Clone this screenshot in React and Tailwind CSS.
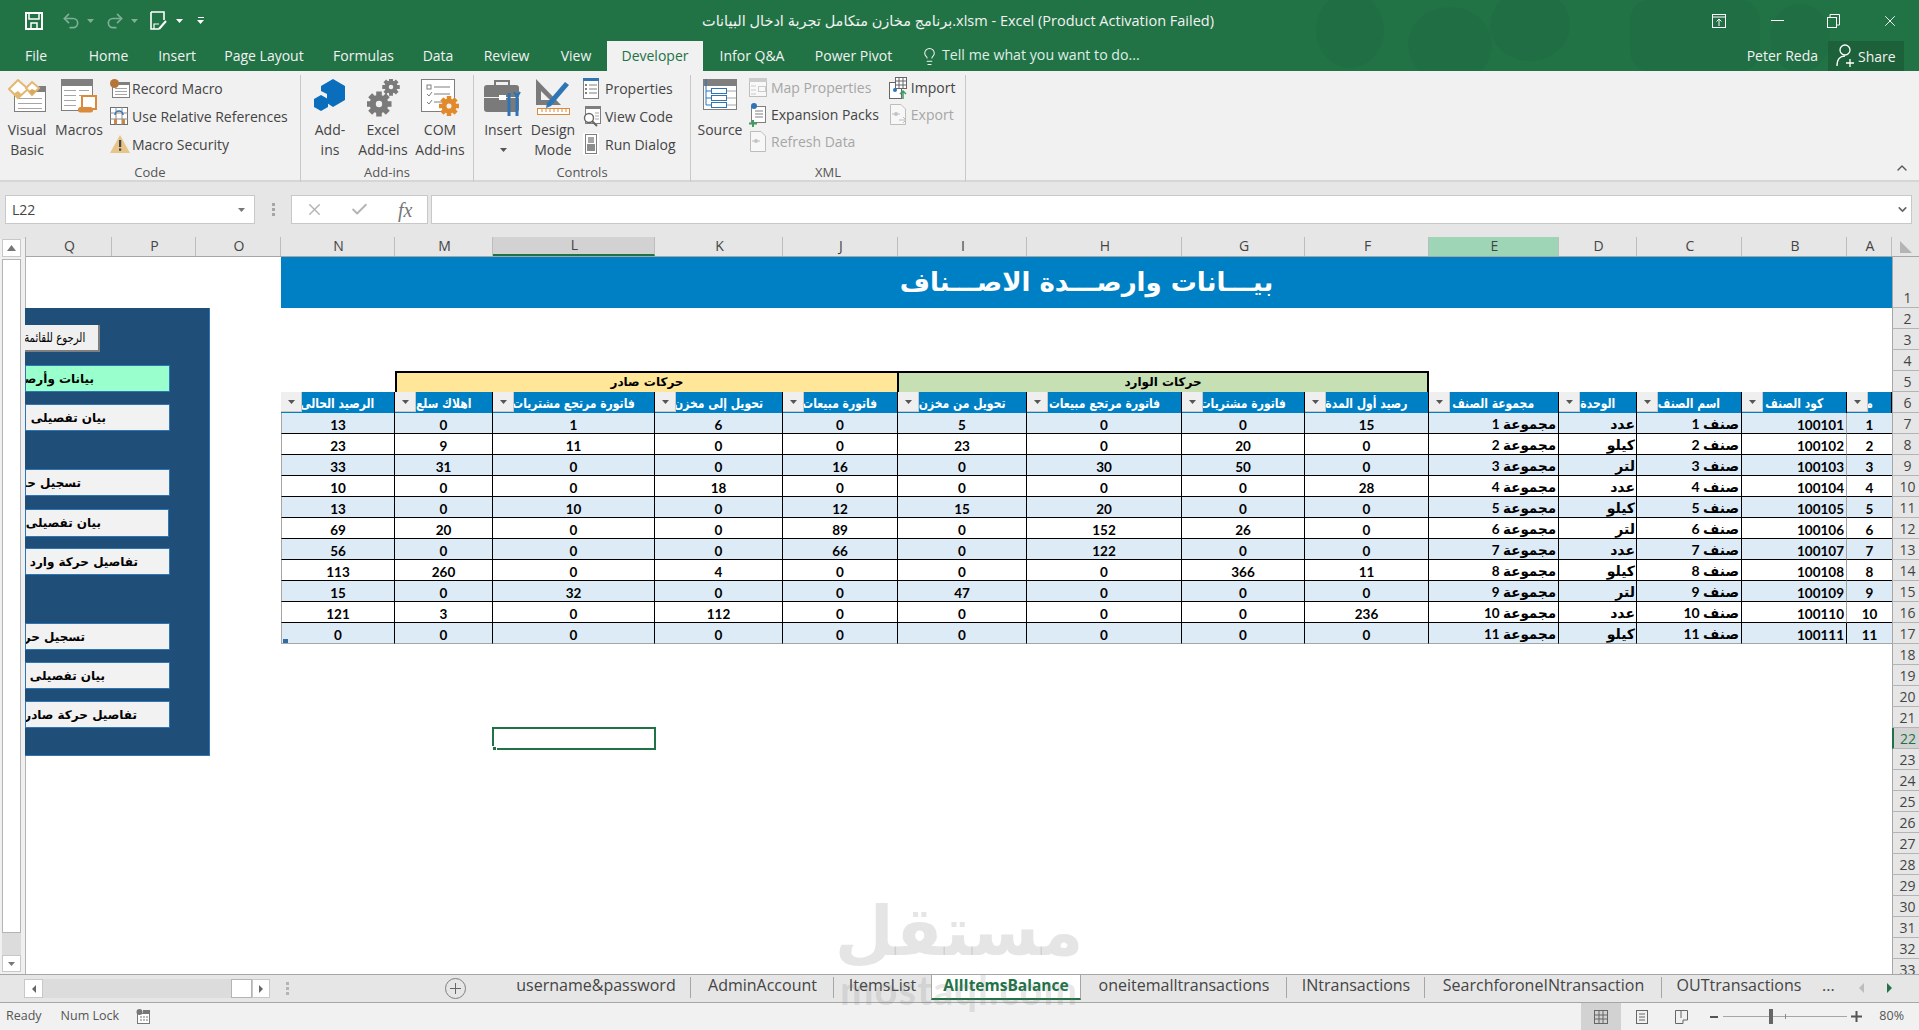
import React from "react";
import { Undo2, Redo2, Lightbulb, X, Check, ChevronUp, ChevronDown } from "lucide-react";

// sheet columns Q..A plus the row header, right to left like the workbook
const ROW = "grid grid-rows-[minmax(0,1fr)] grid-cols-[86px_84px_85px_114px_98px_162px_128px_115px_129px_155px_123px_124px_130px_78px_105px_105px_45px_27px]";
const AR = "font-['DejaVu_Sans',sans-serif]";
const NUM = "font-['Lato',sans-serif]";
const MIX = "font-['Lato','DejaVu_Sans',sans-serif]";

const colLetters = ["Q", "P", "O", "N", "M", "L", "K", "J", "I", "H", "G", "F", "E", "D", "C", "B", "A"];

const headers = [
  "الرصيد الحالى",
  "اهلاك سلع",
  "فاتورة مرتجع مشتريات",
  "تحويل إلى مخزن",
  "فاتورة مبيعات",
  "تحويل من مخزن",
  "فاتورة مرتجع مبيعات",
  "فاتورة مشتريات",
  "رصيد أول المدة",
  "مجموعة الصنف",
  "الوحدة",
  "اسم الصنف",
  "كود الصنف",
  "م",
];

const rows = [
  [13, 0, 1, 6, 0, 5, 0, 0, 15],
  [23, 9, 11, 0, 0, 23, 0, 20, 0],
  [33, 31, 0, 0, 16, 0, 30, 50, 0],
  [10, 0, 0, 18, 0, 0, 0, 0, 28],
  [13, 0, 10, 0, 12, 15, 20, 0, 0],
  [69, 20, 0, 0, 89, 0, 152, 26, 0],
  [56, 0, 0, 0, 66, 0, 122, 0, 0],
  [113, 260, 0, 4, 0, 0, 0, 366, 11],
  [15, 0, 32, 0, 0, 47, 0, 0, 0],
  [121, 3, 0, 112, 0, 0, 0, 0, 236],
  [0, 0, 0, 0, 0, 0, 0, 0, 0],
];
const units = ["عدد", "كيلو", "لتر"];

const panelButtons = [
  { text: "بيانات وأرصدة الاصناف", cls: "mt-[13px] h-[27px] w-[145px] pr-[75px] bg-[#99ffcc]" },
  { text: "بيان تفصيلى بحركة صنف", cls: "mt-[12px] h-[27px] w-[145px] pr-[63px] bg-[#f2f2f2]" },
  { text: "تسجيل حركة وارد", cls: "mt-[38px] h-[27px] w-[145px] pr-[88px] bg-[#f2f2f2]" },
  { text: "بيان تفصيلى بحركة وارد", cls: "mt-[13px] h-[28px] w-[144px] pr-[67px] bg-[#f2f2f2]" },
  { text: "تفاصيل حركة وارد من مورد", cls: "mt-[11px] h-[27px] w-[145px] pr-[31px] bg-[#f2f2f2]" },
  { text: "تسجيل حركة صادر", cls: "mt-[48px] h-[27px] w-[145px] pr-[84px] bg-[#f2f2f2]" },
  { text: "بيان تفصيلى بحركة صادر", cls: "mt-[12px] h-[27px] w-[145px] pr-[64px] bg-[#f2f2f2]" },
  { text: "تفاصيل حركة صادر من مخزن", cls: "mt-[12px] h-[27px] w-[145px] pr-[32px] bg-[#f2f2f2]" },
];

const topTabs = [
  { label: "File", cls: "w-[72px]" },
  { label: "Home", cls: "w-[73px]" },
  { label: "Insert", cls: "w-[64px]" },
  { label: "Page Layout", cls: "w-[110px]" },
  { label: "Formulas", cls: "w-[89px]" },
  { label: "Data", cls: "w-[60px]" },
  { label: "Review", cls: "w-[77px]" },
  { label: "View", cls: "w-[62px]" },
  { label: "Developer", cls: "w-[96px] bg-[#f1f1f1] text-[#217346]" },
  { label: "Infor Q&A", cls: "w-[98px]" },
  { label: "Power Pivot", cls: "w-[105px]" },
];

const sheetTabs = [
  { label: "username&password", cls: "w-[190px]" },
  { label: "AdminAccount", cls: "w-[143px]" },
  { label: "ItemsList", cls: "w-[97px]" },
  { label: "AllItemsBalance", cls: "w-[150px]", active: true },
  { label: "oneitemalltransactions", cls: "w-[206px]" },
  { label: "INtransactions", cls: "w-[138px]" },
  { label: "SearchforoneINtransaction", cls: "w-[237px]" },
  { label: "OUTtransactions", cls: "w-[154px]" },
];

/* ---------- drawn ribbon icons ---------- */
const SheetLines = ({ x, y, w, n, gap = 5 }) =>
  Array.from({ length: n }).map((_, i) => (
    <rect key={i} x={x} y={y + i * gap} width={w} height="1" fill="#a6a6a6" />
  ));

const VisualBasicIcon = () => (
  <svg width="38" height="33" viewBox="0 0 38 33">
    <rect x="6.5" y="10.5" width="31" height="22" fill="#fff" stroke="#7f7f7f" />
    <rect x="28" y="7" width="10" height="6" fill="#7f7f7f" />
    <SheetLines x={10} y={19} w={24} n={3} />
    <path d="M10 1 L20 10 L10 19 L1 10 Z" fill="#fff" stroke="#e3b873" strokeWidth="2" />
    <path d="M10 12 L14 15.5 L10 19 L5 15 Z" fill="#e3b873" />
    <path d="M24 3 L31 9 L24 16 L18 9 Z" fill="#fff" stroke="#e3b873" strokeWidth="2" />
    <path d="M24 10 L28 12 L24 16 L21 12 Z" fill="#d9a860" />
  </svg>
);
const MacrosIcon = () => (
  <svg width="37" height="34" viewBox="0 0 37 34">
    <rect x="0.5" y="0.5" width="31" height="31" fill="#fff" stroke="#7f7f7f" />
    <rect x="0" y="0" width="32" height="7" fill="#7f7f7f" />
    <SheetLines x={3} y={11} w={12} n={4} />
    <SheetLines x={18} y={11} w={10} n={2} />
    <path d="M21 17 H35 V30 H21 Z" fill="#fff" stroke="#d98a3d" strokeWidth="2" />
    <rect x="17" y="28" width="15" height="5.5" rx="2.5" fill="#d98a3d" />
  </svg>
);
const RecordIcon = () => (
  <svg width="20" height="19" viewBox="0 0 20 19">
    <rect x="2.5" y="3.5" width="17" height="15" fill="#fff" stroke="#7f7f7f" />
    <rect x="2" y="3" width="18" height="3" fill="#7f7f7f" />
    <SheetLines x={5} y={9} w={12} n={3} gap={3} />
    <circle cx="4.5" cy="4.5" r="4.5" fill="#b5763a" />
  </svg>
);
const RelativeIcon = () => (
  <svg width="18" height="18" viewBox="0 0 18 18">
    <rect x="0.5" y="0.5" width="17" height="17" fill="#fff" stroke="#6f6f6f" />
    <path d="M6 0V18M12 0V18M0 6H18M0 12H18" stroke="#8c8c8c" />
    <path d="M5 8 A4 4 0 0 1 13 8" fill="none" stroke="#2e75b6" strokeWidth="1.5" />
    <rect x="4" y="12" width="3" height="5" fill="#c98945" />
    <rect x="12" y="12" width="3" height="5" fill="#c98945" />
  </svg>
);
const WarnIcon = () => (
  <svg width="20" height="18" viewBox="0 0 20 18">
    <path d="M10 0 L20 18 H0 Z" fill="#e6c48a" />
    <rect x="9" y="5" width="2.2" height="7" fill="#444" />
    <rect x="9" y="13.5" width="2.2" height="2.2" fill="#444" />
  </svg>
);
const AddInsIcon = () => (
  <svg width="32" height="32" viewBox="0 0 32 32">
    <path d="M19 0 L31 7 V21 L19 28 L13 24 V15 L7 12 V7 Z" fill="#0a6ebd" />
    <path d="M7 16 L14 20 V28 L7 32 L0 28 V20 Z" fill="#0a6ebd" />
  </svg>
);
const Gear = ({ x, y, r, fill = "#7a7a7a" }) => (
  <g transform={`translate(${x} ${y})`}>
    {[0, 45, 90, 135].map((a) => (
      <rect key={a} x={-r * 0.28} y={-r * 1.25} width={r * 0.56} height={r * 2.5} fill={fill} transform={`rotate(${a})`} />
    ))}
    <circle r={r * 0.62} fill="none" stroke={fill} strokeWidth={r * 0.62} />
    <circle r={r * 0.32} fill="#f1f1f1" />
  </g>
);
const ExcelAddInsIcon = () => (
  <svg width="33" height="38" viewBox="0 0 33 38">
    <Gear x={12} y={25} r={10} />
    <Gear x={24} y={8} r={7} />
  </svg>
);
const ComIcon = () => (
  <svg width="38" height="38" viewBox="0 0 38 38">
    <rect x="0.5" y="0.5" width="33" height="32" fill="#fff" stroke="#7f7f7f" />
    <rect x="6" y="6" width="4" height="4" fill="none" stroke="#7f7f7f" />
    <path d="M13 8H29M13 15H29M13 23H22" stroke="#7f7f7f" />
    <path d="M6 15l2 2 3-4M6 23l2 2 3-4" stroke="#7f7f7f" fill="none" />
    <Gear x={28} y={27} r={8} fill="#e28a2b" />
  </svg>
);
const ToolboxIcon = () => (
  <svg width="38" height="38" viewBox="0 0 38 38">
    <path d="M11 6 V2 H25 V6" fill="none" stroke="#7a7a7a" strokeWidth="2" />
    <rect x="0" y="6" width="35" height="27" rx="3" fill="#7a7a7a" />
    <rect x="0" y="18" width="35" height="1" fill="#f1f1f1" />
    <rect x="15" y="16" width="7" height="5" fill="#fff" />
    <path d="M25 14 V37 M33 14 V37" stroke="#2e75b6" strokeWidth="3" />
    <path d="M30 13 L33 18 L36 13" stroke="#2e75b6" strokeWidth="2" fill="none" />
  </svg>
);
const DesignIcon = () => (
  <svg width="36" height="38" viewBox="0 0 36 38">
    <path d="M1 0 L1 26 L26 26 Z M6 12 L6 21 L15 21 Z" fill="#7a7a7a" fillRule="evenodd" />
    <path d="M12 24 L30 3 L34 6 L16 27 L11 29 Z" fill="#2e75b6" />
    <rect x="2.5" y="29.5" width="32" height="6" fill="#fff" stroke="#d98a3d" />
    <path d="M7 30v3M11 30v3M15 30v3M19 30v3M23 30v3M27 30v3M31 30v3" stroke="#d98a3d" />
  </svg>
);
const PropsIcon = () => (
  <svg width="16" height="21" viewBox="0 0 16 21">
    <rect x="0.5" y="0.5" width="15" height="20" fill="#fff" stroke="#7f7f7f" />
    <rect x="0" y="0" width="16" height="3" fill="#2e75b6" />
    <path d="M6 7H14M6 11H14M6 15H14" stroke="#7f7f7f" />
    <rect x="2" y="6" width="2" height="2" fill="#7f7f7f" />
    <rect x="2" y="10" width="2" height="2" fill="#7f7f7f" />
    <rect x="2" y="14" width="2" height="2" fill="#7f7f7f" />
  </svg>
);
const ViewCodeIcon = () => (
  <svg width="20" height="21" viewBox="0 0 20 21">
    <rect x="2.5" y="0.5" width="15" height="17" fill="#fff" stroke="#7f7f7f" />
    <rect x="2" y="0" width="16" height="3" fill="#7f7f7f" />
    <circle cx="6" cy="12" r="4.5" fill="#fff" stroke="#666" strokeWidth="1.4" />
    <path d="M9 15 L14 20" stroke="#666" strokeWidth="2" />
    <path d="M12 7H16M12 10H16M12 13H16" stroke="#a6a6a6" />
  </svg>
);
const RunDialogIcon = () => (
  <svg width="16" height="22" viewBox="0 0 16 22">
    <rect x="0" y="0" width="16" height="22" fill="#fff" />
    <rect x="2.5" y="1.5" width="11" height="19" fill="#fff" stroke="#7f7f7f" />
    <rect x="5" y="4" width="6" height="6" fill="#a6a6a6" />
    <rect x="4" y="11" width="8" height="7" fill="#8c8c8c" />
  </svg>
);
const SourceIcon = () => (
  <svg width="34" height="31" viewBox="0 0 34 31">
    <rect x="0.5" y="0.5" width="33" height="30" fill="#fff" stroke="#7f7f7f" />
    <rect x="0" y="0" width="34" height="7" fill="#7f7f7f" />
    <path d="M24 12H33M24 19H33M24 26H33" stroke="#a6a6a6" />
    <path d="M3 0V26H8M3 12H8M3 19H8" stroke="#2e75b6" fill="none" />
    <rect x="8.5" y="9.5" width="15" height="5" fill="#fff" stroke="#2e75b6" />
    <rect x="8.5" y="16.5" width="15" height="5" fill="#fff" stroke="#2e75b6" />
    <rect x="8.5" y="23.5" width="15" height="5" fill="#fff" stroke="#2e75b6" />
  </svg>
);
const MapIcon = () => (
  <svg width="18" height="19" viewBox="0 0 18 19" opacity="0.5">
    <rect x="0.5" y="0.5" width="17" height="18" fill="#fff" stroke="#8c8c8c" />
    <rect x="0" y="0" width="18" height="4" fill="#a6a6a6" />
    <path d="M2 8H7M2 12H7M2 16H7" stroke="#a6a6a6" />
    <rect x="9.5" y="8.5" width="7" height="5" fill="#fff" stroke="#a6a6a6" />
  </svg>
);
const PacksIcon = () => (
  <svg width="18" height="24" viewBox="0 0 18 24">
    <rect x="2.5" y="3.5" width="14" height="16" fill="#fff" stroke="#7f7f7f" />
    <path d="M6 8H14M6 11H14M6 14H14" stroke="#7f7f7f" />
    <circle cx="5" cy="3" r="3" fill="#2e75b6" />
    <path d="M4 17V24M0 20.5H8" stroke="#3f9b62" strokeWidth="2" />
  </svg>
);
const DocIcon = ({ faded, arrow }) => (
  <svg width="18" height="21" viewBox="0 0 18 21" opacity={faded ? 0.45 : 1}>
    <path d="M1.5 0.5H12L16.5 5V20.5H1.5Z" fill="#fff" stroke="#7f7f7f" />
    <circle cx="7" cy="10" r="2" fill={faded ? "#8c8c8c" : "#2e75b6"} />
    <path d="M3 10H5M9 10H11" stroke="#7f7f7f" />
    {arrow && <path d="M10 16H17M14 13l3 3-3 3" stroke="#7f7f7f" fill="none" />}
  </svg>
);
const ImportIcon = () => (
  <svg width="18" height="22" viewBox="0 0 18 22">
    <rect x="0.5" y="5.5" width="12" height="16" fill="#fff" stroke="#666" />
    <rect x="6.5" y="0.5" width="11" height="11" fill="#fff" stroke="#666" />
    <path d="M10 0V11M14 0V11M6 4H18M6 8H18" stroke="#666" />
    <circle cx="6" cy="13" r="2" fill="#2e75b6" />
    <path d="M14 22V14M11 17l3-3 3 3" stroke="#3f9b62" strokeWidth="1.5" fill="none" />
  </svg>
);
const Caret = ({ className = "fill-[#555]" }) => (
  <svg width="7" height="4" viewBox="0 0 7 4" className={className}>
    <path d="M0 0H7L3.5 4Z" />
  </svg>
);

/* ---------- ribbon pieces ---------- */
const BigBtn = ({ w, icon, lines }) => (
  <div className={`${w} flex flex-col items-center`}>
    <div className="h-[45px] pt-[4px] flex justify-center">{icon}</div>
    {lines.map((l) => (
      <div key={l} className="h-[20px] leading-[20px] text-[14px] text-[#444] whitespace-nowrap">
        {l}
      </div>
    ))}
  </div>
);

const SmallBtn = ({ icon, text, off, h = "h-[28px]" }) => (
  <div className={`${h} flex items-center text-[14px] whitespace-nowrap ${off ? "text-[#a6a6a6]" : "text-[#444]"}`}>
    <div className="w-[22px] flex items-center">{icon}</div>
    {text}
  </div>
);

const Group = ({ w, label, children }) => (
  <div className={`${w} h-[107px] mt-[4px] flex flex-col border-r border-[#c8c8c8]`}>
    <div className="h-[88px] flex">{children}</div>
    <div className="text-center text-[13px] leading-[18px] text-[#555]">{label}</div>
  </div>
);

const RowHead = ({ n, cls = "", selected }) => (
  <div
    className={`${cls} flex items-end justify-center pl-[3px] border-b border-[#b4b4b4] font-['Open_Sans',sans-serif] font-normal text-[14px] leading-[18px] ${
      selected
        ? "bg-[#d2d2d2] border-l-2 border-l-[#217346] text-[#217346]"
        : "bg-[#e6e6e6] border-l border-l-[#a6a6a6] text-[#444]"
    }`}
  >
    {n}
  </div>
);

const FilterBtn = () => (
  <div className="absolute left-0 top-0 w-[21px] h-[20px] bg-[#efefef] border-r border-b border-[#c8c8c8] flex items-center justify-center">
    <Caret />
  </div>
);

export default function App() {
  return (
    <div className="relative w-[1919px] h-[1030px] overflow-hidden flex flex-col bg-[#f1f1f1] font-['Open_Sans',sans-serif]">
      {/* title + tabs */}
      <div className="relative bg-[#217346] text-white">
        <svg className="absolute left-[1300px] top-0" width="580" height="71" viewBox="0 0 580 71" fill="#206e44">
          <ellipse cx="50" cy="30" rx="34" ry="38" />
          <ellipse cx="150" cy="45" rx="42" ry="38" />
          <ellipse cx="230" cy="25" rx="40" ry="36" />
          <rect x="330" y="0" width="130" height="71" rx="20" />
          <ellipse cx="500" cy="38" rx="30" ry="34" />
        </svg>
        <div className="relative h-[41px] flex items-center">
          <div className="ml-[25px] flex items-center">
            <svg width="18" height="18" viewBox="0 0 18 18" fill="none" stroke="#fff" strokeWidth="2">
              <path d="M1 1H17V17H1Z" />
              <path d="M4 1V7H14V1" strokeWidth="1.5" />
              <path d="M6 17V11H12V17" strokeWidth="1.5" />
            </svg>
            <Undo2 size={20} strokeWidth={2} className="ml-[18px] text-[#7fb096]" />
            <div className="ml-[6px]"><Caret className="fill-[#7fb096]" /></div>
            <Redo2 size={20} strokeWidth={2} className="ml-[11px] text-[#7fb096]" />
            <div className="ml-[6px]"><Caret className="fill-[#7fb096]" /></div>
            <svg className="ml-[12px]" width="18" height="20" viewBox="0 0 18 20" fill="none" stroke="#fff" strokeWidth="1.6">
              <path d="M1 1H14V9M9 18H1V1" />
              <path d="M4 18V13H9" strokeWidth="1.2" />
              <path d="M9 18L16 10" strokeWidth="2" />
            </svg>
            <div className="ml-[8px]"><Caret className="fill-white" /></div>
            <div className="ml-[14px] flex flex-col items-center gap-[2px]">
              <div className="w-[6px] h-[1px] bg-white" />
              <Caret className="fill-white" />
            </div>
          </div>
          <div className="absolute left-[702px] top-[10px] text-[14.5px] leading-[21px] text-[#f2f2f2] whitespace-nowrap font-['Open_Sans','DejaVu_Sans',sans-serif]">
            برنامج مخازن متكامل تجربة ادخال البيانات.xlsm - Excel (Product Activation Failed)
          </div>
          <div className="ml-auto flex items-center">
            <svg width="14" height="14" viewBox="0 0 14 14" fill="none" stroke="#fff">
              <rect x="0.5" y="0.5" width="13" height="13" />
              <path d="M0 3H14M7 12V5M4.5 7.5L7 5l2.5 2.5" />
            </svg>
            <div className="ml-[45px] w-[13px] h-[1px] bg-white" />
            <svg className="ml-[43px]" width="13" height="14" viewBox="0 0 13 14" fill="none" stroke="#fff">
              <rect x="0.5" y="3.5" width="9" height="10" />
              <path d="M3 3V0.5H12.5V11H10" />
            </svg>
            <X size={18} strokeWidth={1.2} className="ml-[41px] mr-[20px]" />
          </div>
        </div>
        <div className="relative h-[30px] flex items-stretch text-[14px] text-[#f2f2f2]">
          {topTabs.map((t) => (
            <div key={t.label} className={`${t.cls} flex items-center justify-center pb-[2px] whitespace-nowrap`}>
              {t.label}
            </div>
          ))}
          <Lightbulb size={19} strokeWidth={1.3} className="ml-[14px] self-center" />
          <div className="ml-[3px] pb-[2px] self-center text-[#dfeee6] text-[14.2px]">Tell me what you want to do...</div>
          <div className="ml-auto pb-[2px] self-center">Peter Reda</div>
          <div className="ml-[10px] mr-[15px] w-[76px] bg-[#1c6139] flex items-center pl-[8px] gap-[3px]">
            <svg width="19" height="24" viewBox="0 0 19 24" fill="none" stroke="#fff" strokeWidth="1.3">
              <circle cx="9" cy="6" r="5" />
              <path d="M1 22C1 15 4 12 9 12M14 15V23M10 19H18" />
            </svg>
            Share
          </div>
        </div>
      </div>

      {/* ribbon */}
      <div className="h-[111px] bg-[#f1f1f1] border-b-2 border-[#d6d6d6] flex relative">
        <Group w="w-[301px]" label="Code">
          <BigBtn w="w-[54px]" icon={<VisualBasicIcon />} lines={["Visual", "Basic"]} />
          <BigBtn w="w-[50px]" icon={<MacrosIcon />} lines={["Macros"]} />
          <div className="ml-[6px] -mt-[1px]">
            <SmallBtn icon={<RecordIcon />} text="Record Macro" />
            <SmallBtn icon={<RelativeIcon />} text="Use Relative References" />
            <SmallBtn icon={<WarnIcon />} text="Macro Security" />
          </div>
        </Group>
        <Group w="w-[173px]" label="Add-ins">
          <BigBtn w="w-[58px]" icon={<AddInsIcon />} lines={["Add-", "ins"]} />
          <BigBtn w="w-[48px]" icon={<ExcelAddInsIcon />} lines={["Excel", "Add-ins"]} />
          <BigBtn w="w-[66px]" icon={<ComIcon />} lines={["COM", "Add-ins"]} />
        </Group>
        <Group w="w-[217px]" label="Controls">
          <div className="w-[58px] flex flex-col items-center">
            <div className="h-[45px] pt-[4px]"><ToolboxIcon /></div>
            <div className="h-[20px] leading-[20px] text-[14px] text-[#444]">Insert</div>
            <div className="h-[20px] flex items-center"><Caret /></div>
          </div>
          <BigBtn w="w-[42px]" icon={<DesignIcon />} lines={["Design", "Mode"]} />
          <div className="ml-[9px] -mt-[1px]">
            <SmallBtn icon={<PropsIcon />} text="Properties" />
            <SmallBtn icon={<ViewCodeIcon />} text="View Code" />
            <SmallBtn icon={<RunDialogIcon />} text="Run Dialog" />
          </div>
        </Group>
        <Group w="w-[275px]" label="XML">
          <BigBtn w="w-[58px]" icon={<SourceIcon />} lines={["Source"]} />
          <div className="-mt-[1px]">
            <SmallBtn h="h-[27px]" icon={<MapIcon />} text="Map Properties" off />
            <SmallBtn h="h-[27px]" icon={<PacksIcon />} text="Expansion Packs" />
            <SmallBtn h="h-[27px]" icon={<DocIcon faded />} text="Refresh Data" off />
          </div>
          <div className="ml-[10px] -mt-[1px]">
            <SmallBtn h="h-[27px]" icon={<ImportIcon />} text="Import" />
            <SmallBtn h="h-[27px]" icon={<DocIcon faded arrow />} text="Export" off />
          </div>
        </Group>
        <ChevronUp size={16} className="absolute right-[9px] bottom-[4px] text-[#555]" />
      </div>

      {/* formula bar */}
      <div className="h-[55px] bg-[#e6e6e6] flex pt-[13px]">
        <div className="ml-[5px] w-[250px] h-[29px] bg-white border border-[#c8c8c8] flex items-center justify-between pl-[6px] pr-[9px] text-[14px] text-[#444]">
          L22
          <Caret className="fill-[#777]" />
        </div>
        <div className="ml-[17px] mt-[8px] flex flex-col gap-[2px]">
          <div className="w-[3px] h-[3px] bg-[#a6a6a6]" />
          <div className="w-[3px] h-[3px] bg-[#a6a6a6]" />
          <div className="w-[3px] h-[3px] bg-[#a6a6a6]" />
        </div>
        <div className="ml-[16px] w-[137px] h-[29px] bg-white border border-[#c8c8c8] flex items-center pl-[13px] text-[#b4b4b4]">
          <X size={19} strokeWidth={1.8} />
          <Check size={19} strokeWidth={2.4} className="ml-[26px]" />
          <span className="ml-[29px] text-[#777] italic text-[20px] font-['Liberation_Serif',serif]">fx</span>
        </div>
        <div className="ml-[3px] w-[1481px] h-[29px] bg-white border border-[#c8c8c8] flex items-center justify-end pr-[2px]">
          <ChevronDown size={13} strokeWidth={3} className="text-[#666]" />
        </div>
      </div>

      {/* sheet */}
      <div className="relative h-[737px] flex overflow-hidden bg-white">
        <div className="w-[26px] shrink-0 bg-[#f0f0f0] border-r border-[#b4b4b4] flex flex-col pl-[2px]">
          <div className="bg-[#e6e6e6] h-[2px] -ml-[2px] w-[25px]" />
          <div className="w-[19px] h-[18px] bg-white border border-[#c8c8c8] flex items-center justify-center">
            <svg width="9" height="6" viewBox="0 0 9 6" className="fill-[#777]"><path d="M0 6H9L4.5 0Z" /></svg>
          </div>
          <div className="mt-[2px] w-[19px] h-[674px] bg-white border border-[#b4b4b4]" />
          <div className="w-[19px] h-[22px] bg-[#dcdcdc]" />
          <div className="w-[19px] h-[17px] bg-white border border-[#c8c8c8] flex items-center justify-center">
            <Caret className="fill-[#777]" />
          </div>
        </div>

        <div className="w-[1893px] shrink-0">
          {/* column letters */}
          <div className={`${ROW} h-[20px] bg-[#e6e6e6] border-b border-[#a6a6a6] text-[14px] leading-[17px] text-[#444]`}>
            {colLetters.map((c) => (
              <div
                key={c}
                className={`flex items-center justify-center pl-[2px] pb-[2px] border-r border-[#bdbdbd] ${
                  c === "L"
                    ? "bg-[#d2d2d2] border-b-2 border-b-[#217346]"
                    : c === "E"
                      ? "bg-[#9fd5b7]"
                      : ""
                }`}
              >
                {c}
              </div>
            ))}
            <div className="flex items-center justify-center">
              <svg width="12" height="12" viewBox="0 0 12 12" className="fill-[#b4b4b4]"><path d="M0 0V12H12Z" /></svg>
            </div>
          </div>

          {/* row 1 */}
          <div className={`${ROW} h-[51px]`}>
            <div className="col-span-3" />
            <div className={`col-span-14 bg-[#0080c4] flex items-center justify-center text-white font-bold text-[26px] ${AR}`} dir="rtl">
              بيـــانات وارصـــدة الاصـــناف
            </div>
            <RowHead n={1} />
          </div>

          {/* rows 2-4 */}
          {[2, 3, 4].map((n) => (
            <div key={n} className={`${ROW} h-[21px]`}>
              <div className="col-span-17" />
              <RowHead n={n} />
            </div>
          ))}

          {/* row 5 group bands */}
          <div className={`${ROW} h-[21px]`}>
            <div className="col-span-4" />
            <div className={`col-span-4 bg-[#ffe699] border-t-2 border-l-2 border-r border-black flex items-center justify-center pb-[2px] text-[12px] leading-[16px] font-bold text-black ${AR}`} dir="rtl">
              حركات صادر
            </div>
            <div className={`col-span-4 bg-[#c6e0b4] border-t-2 border-l border-r-2 border-black flex items-center justify-center pb-[2px] text-[12px] leading-[16px] font-bold text-black ${AR}`} dir="rtl">
              حركات الوارد
            </div>
            <div className="col-span-5" />
            <RowHead n={5} />
          </div>

          {/* row 6 headers */}
          <div className={`${ROW} h-[21px]`}>
            <div className="col-span-3" />
            {headers.map((h) => (
              <div
                key={h}
                dir="rtl"
                className={`relative overflow-hidden bg-[#0080c4] border-r border-black flex items-center justify-center pt-[1px] whitespace-nowrap text-white font-bold text-[13.5px] leading-[18px] ${AR}`}
              >
                <span className="inline-block shrink-0 scale-x-[0.8]">{h}</span>
                <FilterBtn />
              </div>
            ))}
            <RowHead n={6} />
          </div>

          {/* data rows */}
          {rows.map((r, i) => {
            const last = i === rows.length - 1;
            const line = last ? "border-b border-r border-r-black border-b-[#a6a6a6]" : "border-b border-r border-black";
            const bg = i % 2 === 0 ? "bg-[#ddebf7]" : "bg-white";
            return (
              <div key={i} className={`${ROW} h-[21px] font-bold text-[13.5px] leading-[16px] text-black`}>
                <div className="col-span-3" />
                {r.map((v, j) => (
                  <div
                    key={j}
                    className={`relative flex items-center justify-center pt-[3px] ${NUM} ${bg} ${line} ${j === 0 ? "border-l border-l-[#a6a6a6]" : ""}`}
                  >
                    {v}
                    {last && j === 0 && <div className="absolute left-[1px] bottom-0 w-[5px] h-[4px] bg-[#2e6da4]" />}
                  </div>
                ))}
                <div dir="rtl" className={`${bg} ${line} flex items-center pt-[1px] pr-[2px] whitespace-nowrap text-[13.5px] ${MIX}`}>
                  مجموعة {i + 1}
                </div>
                <div dir="rtl" className={`${bg} ${line} flex items-center pt-[1px] pr-[1px] whitespace-nowrap text-[14px] ${MIX}`}>
                  {units[i % 3]}
                </div>
                <div dir="rtl" className={`${bg} ${line} flex items-center pt-[1px] pr-[2px] whitespace-nowrap text-[14px] ${MIX}`}>
                  صنف {i + 1}
                </div>
                <div className={`${bg} ${line} border-r-[#a6a6a6] flex items-center justify-end pt-[3px] pr-[2px] ${NUM}`}>
                  {100101 + i}
                </div>
                <div className={`${bg} ${last ? "border-b border-[#a6a6a6]" : "border-b border-black"} flex items-center justify-center pt-[3px] ${NUM}`}>
                  {i + 1}
                </div>
                <RowHead n={7 + i} />
              </div>
            );
          })}

          {/* empty rows */}
          {Array.from({ length: 16 }).map((_, i) => (
            <div key={i} className={`${ROW} h-[21px]`}>
              <div className="col-span-17" />
              <RowHead n={18 + i} selected={18 + i === 22} />
            </div>
          ))}
        </div>

        {/* floating menu shape */}
        <div className="absolute left-[25px] top-[71px] w-[185px] h-[448px] bg-[#1f4e79] border-r border-b border-[#2e75b6] flex flex-col overflow-hidden">
          <div dir="rtl" className={`mt-[17px] h-[27px] w-[75px] shrink-0 bg-[#f0f0f0] border-r-2 border-b-2 border-[#7f7f7f] overflow-hidden flex items-center pr-[13px] whitespace-nowrap text-[13px] text-black ${AR}`}>
            <span className="inline-block shrink-0 origin-right scale-x-[0.78]">الرجوع للقائمة الرئيسية</span>
          </div>
          {panelButtons.map((b) => (
            <div
              key={b.text}
              dir="rtl"
              className={`${b.cls} shrink-0 border border-[#2e75b6] overflow-hidden flex items-center whitespace-nowrap text-[12px] font-bold text-black ${AR}`}
            >
              {b.text}
            </div>
          ))}
        </div>

        {/* active cell */}
        <div className="absolute left-[492px] top-[490px] w-[164px] h-[23px] border-2 border-[#217346]">
          <div className="absolute -left-[2px] -bottom-[3px] w-[5px] h-[5px] bg-[#217346] border border-white" />
        </div>
      </div>

      {/* sheet tabs */}
      <div className="h-[29px] bg-[#e6e6e6] border-t border-b border-[#a6a6a6] flex text-[16px] text-[#444]">
        <div className="ml-[24px] mt-[4px] w-[246px] h-[19px] flex bg-[#dcdcdc]">
          <div className="w-[19px] bg-white border border-[#c8c8c8] flex items-center justify-center">
            <svg width="4" height="8" viewBox="0 0 4 8" className="fill-[#666]"><path d="M4 0V8L0 4Z" /></svg>
          </div>
          <div className="w-[188px]" />
          <div className="w-[21px] bg-white border border-[#b4b4b4]" />
          <div className="w-[18px] bg-white border border-[#c8c8c8] flex items-center justify-center">
            <svg width="4" height="8" viewBox="0 0 4 8" className="fill-[#666]"><path d="M0 0V8L4 4Z" /></svg>
          </div>
        </div>
        <div className="ml-[16px] mt-[7px] flex flex-col gap-[2px]">
          <div className="w-[3px] h-[3px] bg-[#b4b4b4]" />
          <div className="w-[3px] h-[3px] bg-[#b4b4b4]" />
          <div className="w-[3px] h-[3px] bg-[#b4b4b4]" />
        </div>
        <div className="ml-[156px] mt-[3px] w-[21px] h-[21px] rounded-full border border-[#7f7f7f] flex items-center justify-center text-[#666]">
          <svg width="11" height="11" viewBox="0 0 11 11" stroke="currentColor"><path d="M5.5 0V11M0 5.5H11" /></svg>
        </div>
        <div className="ml-[35px] flex h-[25px]">
          {sheetTabs.map((t, i) =>
            t.active ? (
              <div key={t.label} className={`${t.cls} bg-white border-x border-[#a6a6a6] border-b-2 border-b-[#217346] flex items-center justify-center pb-[2px] font-bold text-[15.5px] text-[#217346] whitespace-nowrap`}>
                {t.label}
              </div>
            ) : (
              <div key={t.label} className={`${t.cls} flex items-center whitespace-nowrap`}>
                <div className="flex-1" />
                <span className="pb-[5px]">{t.label}</span>
                <div className="h-[21px] flex-1 flex justify-end">
                  {sheetTabs[i + 1] && !sheetTabs[i + 1].active && <div className="w-[1px] h-[21px] bg-[#a6a6a6]" />}
                </div>
              </div>
            )
          )}
          <div className="ml-[6px] leading-[21px]">...</div>
        </div>
        <div className="ml-[24px] mt-[8px] flex items-start gap-[23px]">
          <svg width="5" height="10" viewBox="0 0 5 10" className="fill-[#bdbdbd]"><path d="M5 0V10L0 5Z" /></svg>
          <svg width="5" height="10" viewBox="0 0 5 10" className="fill-[#217346]"><path d="M0 0V10L5 5Z" /></svg>
        </div>
      </div>

      {/* status bar */}
      <div className="h-[27px] flex items-center text-[12.5px] text-[#555]">
        <span className="ml-[6px]">Ready</span>
        <span className="ml-[19px]">Num Lock</span>
        <svg className="ml-[17px]" width="15" height="15" viewBox="0 0 15 15">
          <rect x="1.5" y="4.5" width="12" height="10" fill="#fff" stroke="#777" />
          <circle cx="3.5" cy="3" r="3" fill="#777" />
          <rect x="7" y="1" width="7" height="3" fill="#777" />
          <path d="M4 8h2M7 8h2M10 8h2M4 11h2M7 11h2M10 11h2" stroke="#777" />
        </svg>
        <div className="ml-auto flex items-center h-full">
          <div className="w-[40px] h-full bg-[#d2d2d2] flex items-center justify-center">
            <svg width="14" height="14" viewBox="0 0 14 14" fill="none" stroke="#666">
              <rect x="0.5" y="0.5" width="13" height="13" />
              <path d="M5 0V14M9 0V14M0 5H14M0 9H14" />
            </svg>
          </div>
          <svg className="ml-[15px]" width="12" height="14" viewBox="0 0 12 14" fill="none" stroke="#666">
            <rect x="0.5" y="0.5" width="11" height="13" />
            <path d="M3 4H9M3 7H9M3 10H9" />
          </svg>
          <svg className="ml-[27px]" width="13" height="14" viewBox="0 0 13 14" fill="none" stroke="#666">
            <path d="M0.5 0.5H12.5V10H8V13.5H0.5Z M6 0V8" />
          </svg>
          <div className="ml-[22px] w-[8px] h-[2px] bg-[#555]" />
          <div className="relative ml-[5px] w-[124px] h-[1px] bg-[#a6a6a6]">
            <div className="absolute left-[46px] -top-[7px] w-[4px] h-[15px] bg-[#666]" />
            <div className="absolute left-[62px] -top-[2px] w-[1px] h-[5px] bg-[#888]" />
          </div>
          <svg className="ml-[4px]" width="11" height="11" viewBox="0 0 11 11" stroke="#555" strokeWidth="2">
            <path d="M5.5 0V11M0 5.5H11" />
          </svg>
          <span className="ml-[17px] mr-[15px]">80%</span>
        </div>
      </div>

      {/* mostaql watermark over the window */}
      <div className="absolute left-[843px] top-[890px] w-[232px] flex flex-col items-center pointer-events-none text-[rgba(110,110,110,0.18)] font-bold">
        <div className={`text-[68px] leading-[84px] ${AR}`} dir="rtl">مستقل</div>
        <div className="text-[40px] leading-[32px] font-['Lato',sans-serif] tracking-[1px]">mostaql.com</div>
      </div>
    </div>
  );
}
